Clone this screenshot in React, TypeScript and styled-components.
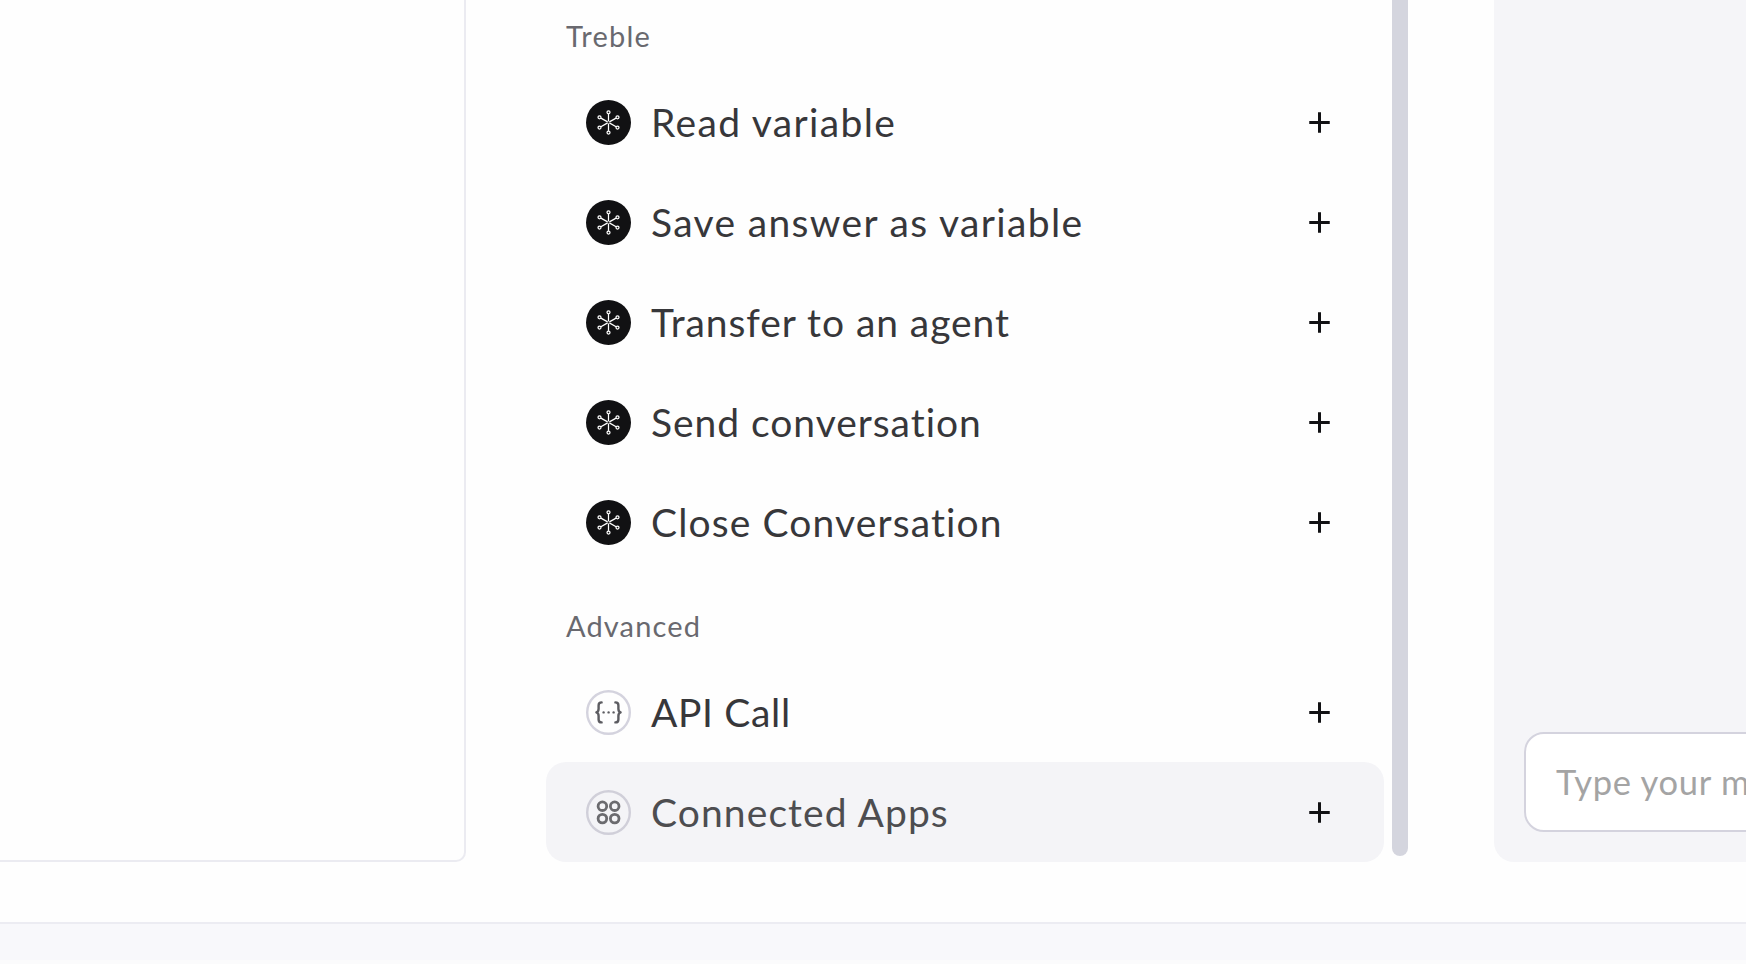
import React from "react";
import styled, { createGlobalStyle } from "styled-components";

interface Block {
  label: string;
  icon: "treble" | "api" | "apps";
  tracking: number;
  active?: boolean;
}

const trebleBlocks: Block[] = [
  { label: "Read variable", icon: "treble", tracking: 1.35 },
  { label: "Save answer as variable", icon: "treble", tracking: 1.35 },
  { label: "Transfer to an agent", icon: "treble", tracking: 0.94 },
  { label: "Send conversation", icon: "treble", tracking: 0.96 },
  { label: "Close Conversation", icon: "treble", tracking: 1.12 },
];

const advancedBlocks: Block[] = [
  { label: "API Call", icon: "api", tracking: 0.65 },
  { label: "Connected Apps", icon: "apps", tracking: 1.1, active: true },
];

const spokes = [
  [22.5, 12.3],
  [31.5, 17.3],
  [31.5, 27.5],
  [22.5, 32.5],
  [13.5, 27.5],
  [13.5, 17.3],
];

function TrebleIcon() {
  return (
    <Icon viewBox="0 0 45 45">
      <circle cx="22.5" cy="22.5" r="22.5" fill="#111113" />
      <g fill="none" stroke="#fff" strokeWidth="1.25">
        {spokes.map(([x, y]) => {
          const dx = (x - 22.5) / 10.3;
          const dy = (y - 22.4) / 10.3;
          return (
            <React.Fragment key={`${x}-${y}`}>
              <circle cx={x} cy={y} r="1.5" />
              <path
                d={`M${22.5 + dx} ${22.4 + dy}L${x - dx * 1.6} ${y - dy * 1.6}`}
              />
            </React.Fragment>
          );
        })}
      </g>
    </Icon>
  );
}

function ApiIcon() {
  return (
    <Icon viewBox="0 0 45 45">
      <circle cx="22.5" cy="22.5" r="21.3" fill="none" stroke="#d4d3de" strokeWidth="2.4" />
      <g fill="none" stroke="#5c5c61" strokeWidth="2.4" strokeLinecap="round" strokeLinejoin="round">
        <path d="M15.6 12.4c-2.4 0-3 1-3 3v3.3c0 2-.6 3.2-2.2 3.7 1.6.5 2.2 1.7 2.2 3.7v3.3c0 2 .6 3 3 3" />
        <path d="M29.4 12.4c2.4 0 3 1 3 3v3.3c0 2 .6 3.2 2.2 3.7-1.6.5-2.2 1.7-2.2 3.7v3.3c0 2-.6 3-3 3" />
      </g>
      <g fill="#5c5c61">
        <circle cx="17.6" cy="22.4" r="1.2" />
        <circle cx="22.6" cy="22.4" r="1.2" />
        <circle cx="27.6" cy="22.4" r="1.2" />
      </g>
    </Icon>
  );
}

function AppsIcon() {
  return (
    <Icon viewBox="0 0 45 45">
      <circle cx="22.5" cy="22.5" r="21.3" fill="none" stroke="#d0cfd9" strokeWidth="2.4" />
      <g fill="none" stroke="#6b6b6f" strokeWidth="2.8">
        <circle cx="16.4" cy="16.2" r="4.3" />
        <circle cx="28.7" cy="16.2" r="4.3" />
        <circle cx="16.4" cy="28.6" r="4.3" />
        <circle cx="28.7" cy="28.6" r="4.3" />
      </g>
    </Icon>
  );
}

const icons = { treble: TrebleIcon, api: ApiIcon, apps: AppsIcon };

function BlockRow({ label, icon, tracking, active }: Block) {
  const BlockIcon = icons[icon];

  return (
    <Row $active={active}>
      <BlockIcon />
      <RowLabel $tracking={tracking} $active={active}>
        {label}
      </RowLabel>
      <Plus viewBox="0 0 21 21">
        <path d="M10.5 .25v20.5M.25 10.5h20.5" stroke="#111113" strokeWidth="3" />
      </Plus>
    </Row>
  );
}

export default function App() {
  return (
    <>
      <GlobalStyle />
      <Page>
        <Main>
          <Canvas />
          <Blocks>
            <SectionTitle $tracking={1.25}>Treble</SectionTitle>
            {trebleBlocks.map((block) => (
              <BlockRow key={block.label} {...block} />
            ))}
            <SectionTitle $tracking={1.14}>Advanced</SectionTitle>
            {advancedBlocks.map((block) => (
              <BlockRow key={block.label} {...block} />
            ))}
          </Blocks>
          <Scrollbar />
          <Preview>
            <MessageField>Type your message</MessageField>
          </Preview>
        </Main>
        <Footer />
      </Page>
    </>
  );
}

const GlobalStyle = createGlobalStyle`
  body {
    margin: 0;
    overflow: hidden;
    background: #fff;
    font-family: Lato, "Liberation Sans", sans-serif;
  }

  *, *:before, *:after {
    box-sizing: border-box;
  }
`;

const Page = styled.div`
  display: flex;
  flex-direction: column;
  height: 964px;
  overflow: hidden;
`;

const Main = styled.main`
  display: flex;
  height: 922px;
  padding-bottom: 60px;
  background: #fefefe;
`;

const Canvas = styled.section`
  flex: 0 0 466px;
  border: solid #ebebf1;
  border-width: 0 2px 2px 0;
  border-bottom-right-radius: 10px;
`;

const Blocks = styled.section`
  flex: 0 0 838px;
  margin-left: 80px;
`;

const SectionTitle = styled.h2<{ $tracking: number }>`
  margin: 0;
  height: 72px;
  padding: 0 20px;
  font-size: 29px;
  font-weight: 400;
  line-height: 72px;
  letter-spacing: ${(props) => props.$tracking}px;
  color: #69696f;

  &:not(:first-child) {
    height: 90px;
    line-height: 108px;
  }
`;

const Row = styled.div<{ $active?: boolean }>`
  display: flex;
  align-items: center;
  height: 100px;
  padding: 1px 54px 0 40px;
  border-radius: 20px;
  background: ${(props) => (props.$active ? "#f4f4f7" : "transparent")};
`;

const Icon = styled.svg`
  flex: none;
  width: 45px;
  height: 45px;
`;

const RowLabel = styled.span<{ $tracking: number; $active?: boolean }>`
  flex: 1;
  margin-left: 20px;
  padding-bottom: 2px;
  font-size: 39px;
  line-height: 48px;
  white-space: nowrap;
  letter-spacing: ${(props) => props.$tracking}px;
  color: ${(props) => (props.$active ? "#4d4d50" : "#37373a")};
`;

const Plus = styled.svg`
  flex: none;
  width: 21px;
  height: 21px;
`;

const Scrollbar = styled.div`
  flex: 0 0 16px;
  height: 856px;
  margin-left: 8px;
  border-radius: 0 0 8px 8px;
  background: #d4d5de;
`;

const Preview = styled.section`
  display: flex;
  flex: 0 0 700px;
  align-items: flex-end;
  margin-left: 86px;
  padding: 30px;
  border-bottom-left-radius: 20px;
  background: #f5f5f8;
`;

const MessageField = styled.div`
  flex: 1;
  height: 100px;
  padding: 0 30px;
  border: 2px solid #d4d3de;
  border-radius: 20px;
  background: #fff;
  font-size: 34.5px;
  line-height: 95px;
  letter-spacing: 0.75px;
  white-space: nowrap;
  color: #a4a4a4;
`;

const Footer = styled.footer`
  height: 42px;
  border-top: 2px solid #ececf2;
  background: linear-gradient(#f8f8fb 36px, #fbfbfc 36px);
`;
